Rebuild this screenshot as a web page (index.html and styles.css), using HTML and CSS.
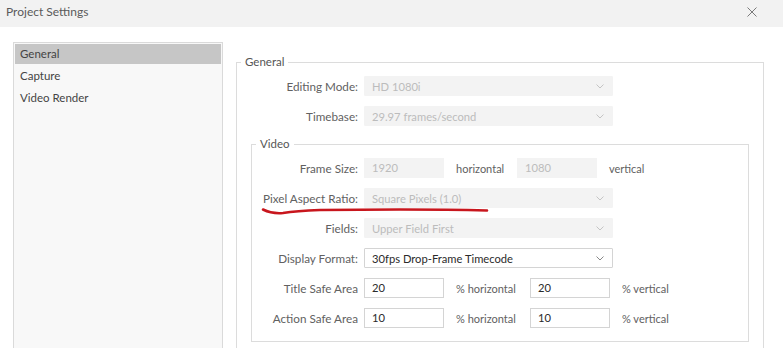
FILE: index.html
```html
<!DOCTYPE html>
<html>
<head>
<meta charset="utf-8">
<link rel="stylesheet" href="styles.css">
</head>
<body>
<div class="titlebar">
  <span class="title">Project Settings</span>
  <svg class="close" width="10" height="10" viewBox="0 0 10 10"><path d="M0.5 0.5L9.5 9.5M9.5 0.5L0.5 9.5" stroke="#7a7a7a" stroke-width="1" fill="none"/></svg>
</div>
<div class="main">
  <div class="sidebar">
    <div class="item selected">General</div>
    <div class="item">Capture</div>
    <div class="item">Video Render</div>
  </div>
  <fieldset class="group outer">
    <legend>General</legend>
    <div class="row">
      <span class="label">Editing Mode:</span>
      <div class="select disabled"><span>HD 1080i</span><svg class="chev" width="8" height="5" viewBox="0 0 8 5"><path d="M0.5 0.5L4 4L7.5 0.5" stroke="#c4c4c4" fill="none"/></svg></div>
    </div>
    <div class="row">
      <span class="label">Timebase:</span>
      <div class="select disabled"><span>29.97 frames/second</span><svg class="chev" width="8" height="5" viewBox="0 0 8 5"><path d="M0.5 0.5L4 4L7.5 0.5" stroke="#c4c4c4" fill="none"/></svg></div>
    </div>
    <fieldset class="group inner">
      <legend>Video</legend>
      <div class="row">
        <span class="label">Frame Size:</span>
        <div class="input disabled">1920</div>
        <span class="suffix s1">horizontal</span>
        <div class="input disabled">1080</div>
        <span class="suffix">vertical</span>
      </div>
      <div class="row">
        <span class="label">Pixel Aspect Ratio:</span>
        <div class="select disabled"><span>Square Pixels (1.0)</span><svg class="chev" width="8" height="5" viewBox="0 0 8 5"><path d="M0.5 0.5L4 4L7.5 0.5" stroke="#c4c4c4" fill="none"/></svg></div>
      </div>
      <div class="row">
        <span class="label">Fields:</span>
        <div class="select disabled"><span>Upper Field First</span><svg class="chev" width="8" height="5" viewBox="0 0 8 5"><path d="M0.5 0.5L4 4L7.5 0.5" stroke="#c4c4c4" fill="none"/></svg></div>
      </div>
      <div class="row">
        <span class="label">Display Format:</span>
        <div class="select"><span>30fps Drop-Frame Timecode</span><svg class="chev" width="8" height="5" viewBox="0 0 8 5"><path d="M0.5 0.5L4 4L7.5 0.5" stroke="#888" fill="none"/></svg></div>
      </div>
      <div class="row">
        <span class="label">Title Safe Area</span>
        <div class="input">20</div>
        <span class="suffix s2">% horizontal</span>
        <div class="input">20</div>
        <span class="suffix">% vertical</span>
      </div>
      <div class="row">
        <span class="label">Action Safe Area</span>
        <div class="input">10</div>
        <span class="suffix s2">% horizontal</span>
        <div class="input">10</div>
        <span class="suffix">% vertical</span>
      </div>
    </fieldset>
  </fieldset>
</div>
<svg class="annot" width="783" height="348" viewBox="0 0 783 348"><path d="M263 209.5 Q272 214 283 213 Q296 211 320 210 L400 209.5 Q450 209.5 487 210.5" stroke="#c8161d" stroke-width="2.6" fill="none" stroke-linecap="round"/></svg>
</body>
</html>
```

FILE: styles.css
```css
html, body {
  margin: 0;
  padding: 0;
  background: #ffffff;
  overflow: hidden;
}
body {
  width: 783px;
  height: 348px;
  font-family: Lato, "Open Sans", sans-serif;
  font-size: 12px;
  color: #555;
  position: relative;
}
.titlebar {
  height: 27px;
  background: #f2f2f2;
  display: flex;
  align-items: center;
  justify-content: space-between;
  padding: 0 26px 0 6px;
}
.title {
  font-size: 12px;
  color: #5a5a5a;
  line-height: 16px;
  margin-top: -3px;
}
.close {
  margin-top: -4px;
}
.main {
  display: flex;
  align-items: flex-start;
  padding: 15px 19px 0 13px;
  height: 306px;
  overflow: hidden;
}
.sidebar {
  width: 206px;
  height: 320px;
  flex: none;
  border: 1px solid #dadada;
  background: #f8f8f8;
  padding: 1px;
  box-sizing: content-box;
}
.item {
  height: 22px;
  line-height: 20px;
  padding-left: 5px;
  color: #444;
  font-size: 11.5px;
}
.item.selected {
  background: #c6c6c6;
  height: 20px;
  margin-bottom: 2px;
}
.group {
  border: 1px solid #dcdcdc;
  margin: 0;
  padding: 0;
  min-width: 0;
}
.group > legend {
  padding: 0 4px;
  margin-left: 4px;
  line-height: 16px;
  font-size: 11.5px;
  color: #555;
}
.outer {
  flex: 1;
  margin-left: 13px;
  margin-top: 12px;
  padding: 6px 0 0 0;
  height: 320px;
}
.inner {
  margin: 7px 14px 0 14px;
  padding: 6px 0 13px 0;
}
.row {
  display: flex;
  align-items: center;
  height: 20px;
  margin-bottom: 10px;
}
.inner .row:last-child {
  margin-bottom: 0;
}
.label {
  width: 121px;
  flex: none;
  text-align: right;
  padding-right: 6px;
  box-sizing: content-box;
  color: #616161;
  white-space: nowrap;
  font-size: 11.7px;
}
.inner .label {
  width: 106px;
}
.select {
  width: 249px;
  height: 20px;
  box-sizing: border-box;
  border: 1px solid #d4d4d4;
  background: #fff;
  display: flex;
  align-items: center;
  justify-content: space-between;
  padding: 0 8px 0 7px;
  color: #2b2b2b;
  border-radius: 1px;
  font-size: 11.2px;
}
.select.disabled, .input.disabled {
  background: #f3f3f3;
  border-color: #f3f3f3;
  color: #bcbcbc;
}
.input {
  width: 80px;
  height: 20px;
  box-sizing: border-box;
  border: 1px solid #d4d4d4;
  background: #fff;
  padding: 0 7px;
  line-height: 17px;
  color: #2b2b2b;
  flex: none;
  font-size: 11.2px;
}
.suffix {
  flex: none;
  padding-left: 12px;
  color: #616161;
  white-space: nowrap;
  font-size: 11px;
}
.suffix.s1 {
  width: 61px;
}
.suffix.s2 {
  width: 74px;
  padding-left: 12px;
}
.annot {
  position: absolute;
  left: 0;
  top: 0;
  pointer-events: none;
}
```
